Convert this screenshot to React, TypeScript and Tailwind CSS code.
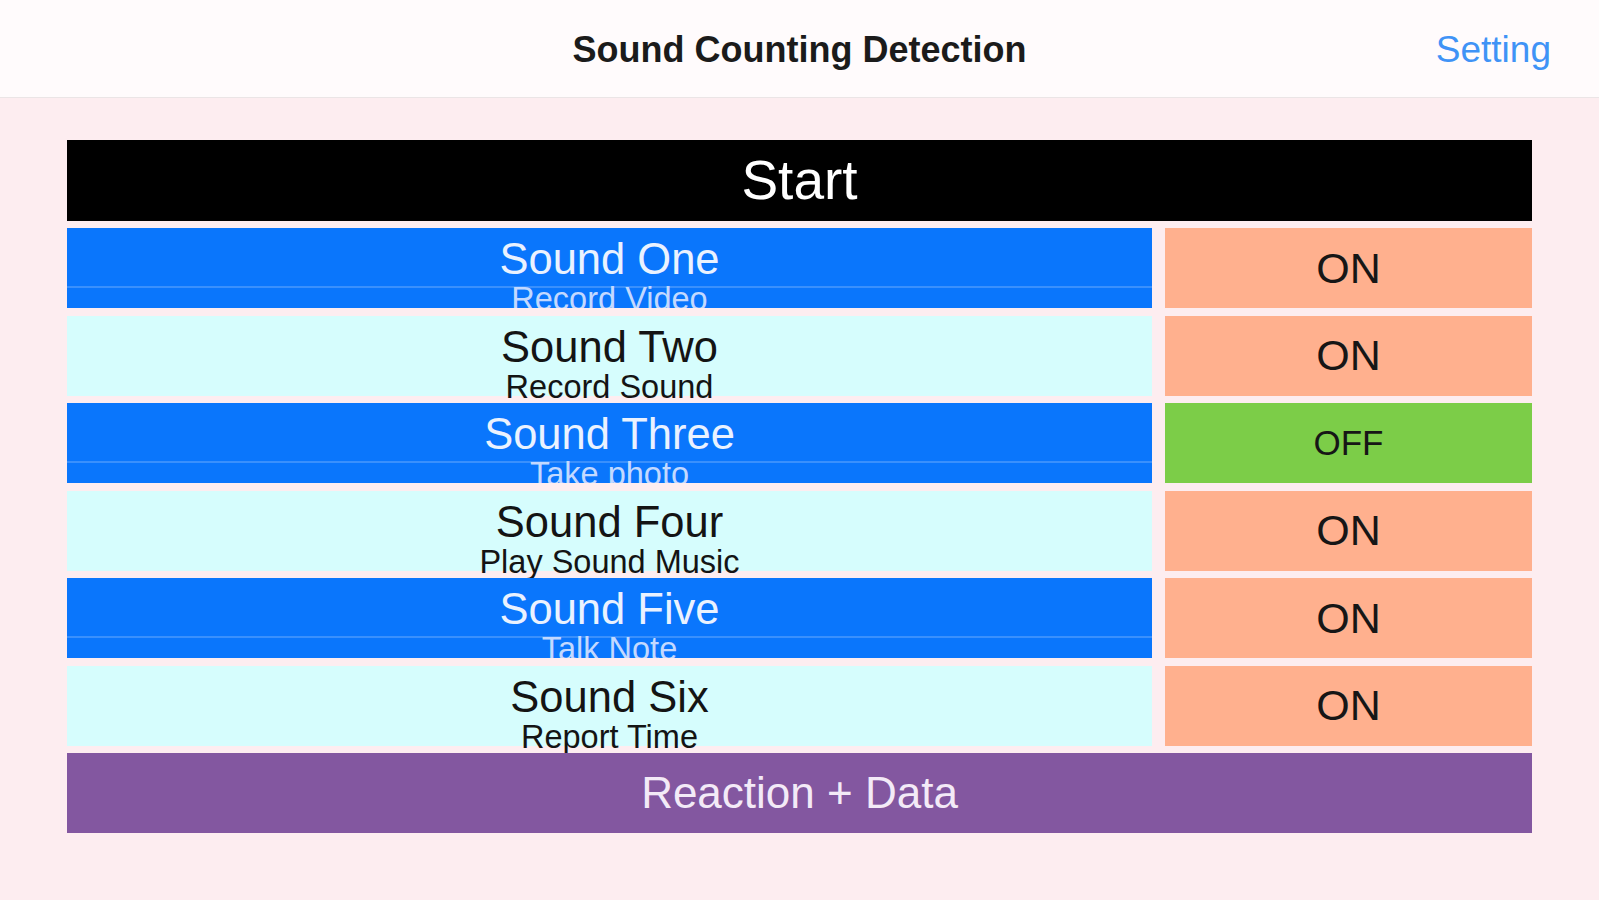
import React from 'react';

type Row = { title: string; sub: string; on: boolean };

const rows: Row[] = [
  { title: 'Sound One', sub: 'Record Video', on: true },
  { title: 'Sound Two', sub: 'Record Sound', on: true },
  { title: 'Sound Three', sub: 'Take photo', on: false },
  { title: 'Sound Four', sub: 'Play Sound Music', on: true },
  { title: 'Sound Five', sub: 'Talk Note', on: true },
  { title: 'Sound Six', sub: 'Report Time', on: true },
];

const SoundRow = ({ row, index }: { row: Row; index: number }) => {
  const blue = index % 2 === 0;

  return (
    <div className="flex h-[80px] gap-[13px]">
      <div
        className={
          blue
            ? 'flex w-[1085px] flex-col items-center overflow-hidden bg-[#0a76fc] pt-[10px] text-[#eaf2ff]'
            : 'flex w-[1085px] flex-col items-center bg-[#d6fdfd] pt-[10px] text-[#141414]'
        }
      >
        <div className="text-[43.5px] leading-[43px]">{row.title}</div>
        <div
          className={
            blue
              ? 'mt-[5px] w-full border-t-2 border-[#3a90fc] text-center'
              : 'mt-[5px] w-full border-t-2 border-transparent text-center'
          }
        >
          <div className={blue ? '-mt-[4px] text-[32.5px] leading-[31px] text-[#c3d9ff]' : '-mt-[4px] text-[32.5px] leading-[31px]'}>
            {row.sub}
          </div>
        </div>
      </div>
      <div
        className={
          row.on
            ? 'flex flex-1 items-center justify-center bg-[#ffb08e] text-[43px] text-[#161616]'
            : 'flex flex-1 items-center justify-center bg-[#7ccd48] text-[35px] text-[#161616]'
        }
      >
        {row.on ? 'ON' : 'OFF'}
      </div>
    </div>
  );
};

const App = () => {
  return (
    <div className="min-h-[900px] bg-[#fdedf0] font-['Liberation_Sans',Arial,sans-serif]">
      <header className="grid h-[98px] grid-cols-[1fr_auto_1fr] items-center border-b border-[#ebe5e6] bg-[#fffbfc] pt-[2px]">
        <div />
        <h1 className="text-[36px] font-bold text-[#1b1b1b]">Sound Counting Detection</h1>
        <div className="flex justify-end pr-[48px]">
          <button className="text-[37px] text-[#3f93f6]">Setting</button>
        </div>
      </header>

      <main className="flex flex-col px-[67px] pt-[42px]">
        <button className="flex h-[81px] items-center justify-center bg-black text-[55px] text-white">
          Start
        </button>
        <div className="mt-[7px] flex flex-col gap-[7.5px]">
          {rows.map((row, i) => (
            <SoundRow key={row.title} row={row} index={i} />
          ))}
          <button className="flex h-[80px] items-center justify-center bg-[#8357a0] text-[44px] text-[#f3eaf7]">
            Reaction + Data
          </button>
        </div>
      </main>
    </div>
  );
};

export default App;
